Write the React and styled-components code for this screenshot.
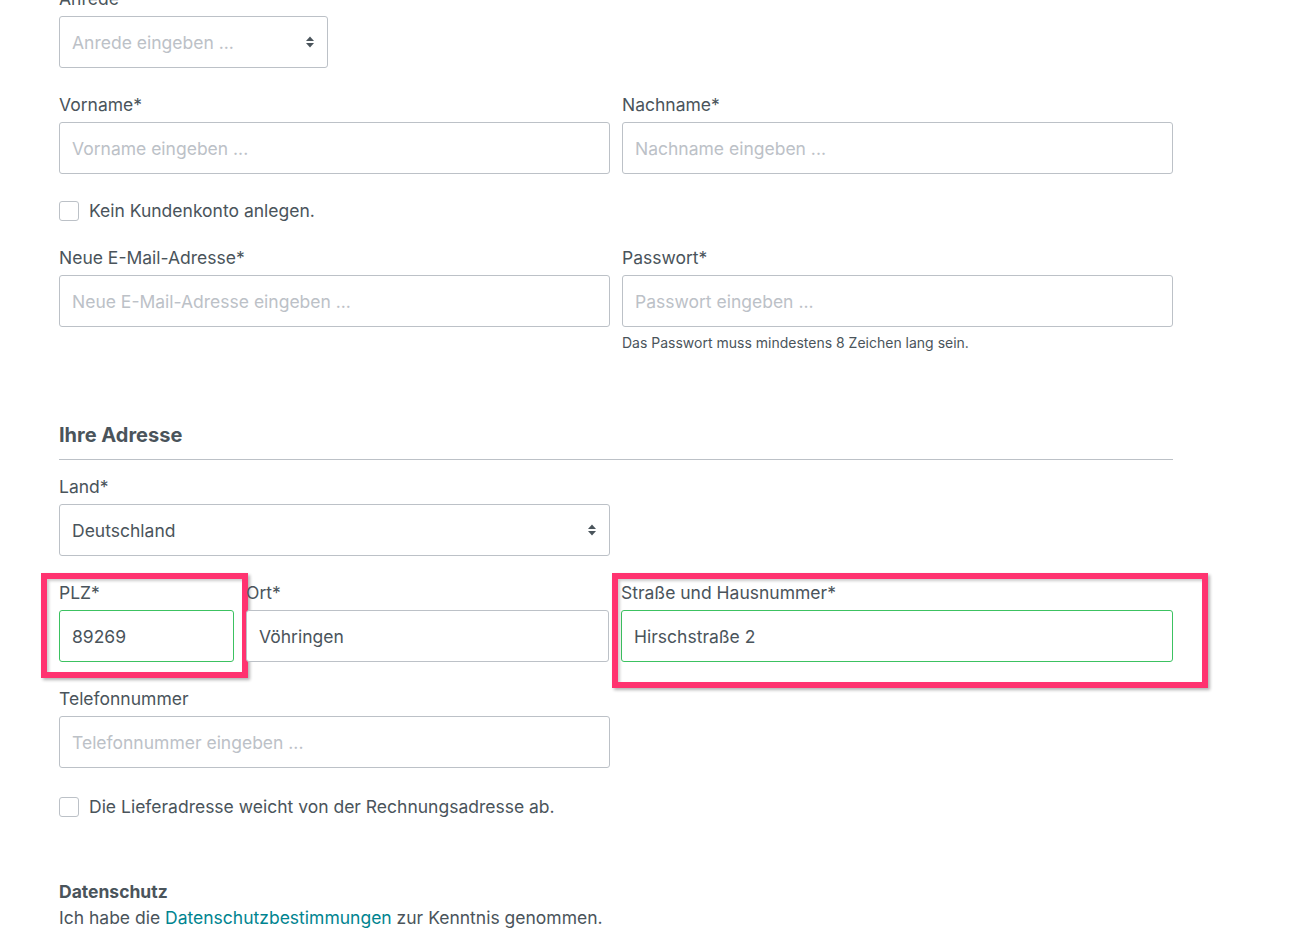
import React from "react";
import styled, { createGlobalStyle, css } from "styled-components";

const textColor = "#4a545b";
const borderColor = "#bcc1c7";
const placeholderColor = "#bcc1c7";
const successColor = "#3cc261";
const linkColor = "#008490";
const markColor = "#ff3370";

const GlobalStyle = createGlobalStyle`
	html, body {
		margin: 0;
		padding: 0;
		background: #fff;
	}
	body {
		font-family: Inter, "Noto Sans", "Liberation Sans", sans-serif;
		font-size: 17.5px;
		color: ${textColor};
	}
	* {
		box-sizing: border-box;
	}
`;

const Page = styled.div`
	width: 1114px;
	margin: -13px 0 0 59px;
`;

const Row = styled.div`
	display: grid;
	grid-template-columns: ${props => props.cols || "1fr 1fr"};
	column-gap: 12px;
	margin-bottom: ${props => props.gap || "25px"};
`;

const Field = styled.div`
	position: relative;
	display: flex;
	flex-direction: column;
`;

const Label = styled.label`
	display: block;
	line-height: 24px;
	margin-bottom: 5px;
	white-space: nowrap;
`;

const fieldBox = css`
	height: 52px;
	width: 100%;
	border: 1px solid ${props => (props.valid ? successColor : borderColor)};
	border-radius: 3px;
	background: #fff;
	padding: 0 12px;
	font-family: inherit;
	font-size: 17.5px;
	color: ${textColor};
	outline: none;
`;

const Input = styled.input`
	${fieldBox};
	&::placeholder {
		color: ${placeholderColor};
		opacity: 1;
	}
`;

const SelectBox = styled.div`
	${fieldBox};
	display: flex;
	align-items: center;
	justify-content: space-between;
	padding-right: 12px;
	color: ${props => (props.empty ? placeholderColor : textColor)};
`;

const Help = styled.div`
	font-size: 14px;
	line-height: 20px;
	margin-top: 6px;
`;

const CheckRow = styled.label`
	display: flex;
	align-items: center;
	gap: 10px;
	line-height: 24px;
	margin-bottom: ${props => props.gap || "23px"};
`;

const CheckBox = styled.span`
	width: 20px;
	height: 20px;
	border: 1px solid ${borderColor};
	border-radius: 3px;
	background: #fff;
	flex: none;
`;

const SectionTitle = styled.h2`
	margin: 67px 0 15px;
	font-size: 20px;
	line-height: 30px;
	font-weight: 700;
	padding-bottom: 9px;
	border-bottom: 1px solid ${borderColor};
`;

const PrivacyTitle = styled.div`
	font-weight: 700;
	line-height: 25px;
	margin-top: 60px;
`;

const PrivacyText = styled.p`
	margin: 1px 0 0;
	line-height: 25px;
`;

const Link = styled.a`
	color: ${linkColor};
	text-decoration: none;
`;

const Mark = styled.div`
	position: absolute;
	pointer-events: none;
	border: 6px solid ${markColor};
	box-shadow: 2px 2px 3px rgba(0, 0, 0, 0.3), inset 2px 2px 3px rgba(0, 0, 0, 0.2);
	top: -8px;
	left: ${props => props.left};
	right: ${props => props.right};
	bottom: ${props => props.bottom};
`;

const SortArrows = () => (
	<svg width="10" height="14" viewBox="0 0 10 14">
		<path d="M1 6 L5 1.5 L9 6 Z" fill={textColor} />
		<path d="M1 8 L5 12.5 L9 8 Z" fill={textColor} />
	</svg>
);

const Select = ({ children, empty }) => (
	<SelectBox empty={empty}>
		<span>{children}</span>
		<SortArrows />
	</SelectBox>
);

const App = () => (
	<>
		<GlobalStyle />
		<Page>
			<Row cols="269px 1fr">
				<Field>
					<Label>Anrede*</Label>
					<Select empty>Anrede eingeben ...</Select>
				</Field>
			</Row>

			<Row>
				<Field>
					<Label>Vorname*</Label>
					<Input placeholder="Vorname eingeben ..." />
				</Field>
				<Field>
					<Label>Nachname*</Label>
					<Input placeholder="Nachname eingeben ..." />
				</Field>
			</Row>

			<CheckRow>
				<CheckBox />
				Kein Kundenkonto anlegen.
			</CheckRow>

			<Row gap="0">
				<Field>
					<Label>Neue E-Mail-Adresse*</Label>
					<Input placeholder="Neue E-Mail-Adresse eingeben ..." />
				</Field>
				<Field>
					<Label>Passwort*</Label>
					<Input placeholder="Passwort eingeben ..." />
					<Help>Das Passwort muss mindestens 8 Zeichen lang sein.</Help>
				</Field>
			</Row>

			<SectionTitle>Ihre Adresse</SectionTitle>

			<Row>
				<Field>
					<Label>Land*</Label>
					<Select>Deutschland</Select>
				</Field>
			</Row>

			<Row cols="175px 363px 1fr">
				<Field>
					<Label>PLZ*</Label>
					<Input valid defaultValue="89269" />
					<Mark left="-18px" right="-14px" bottom="-16px" />
				</Field>
				<Field>
					<Label>Ort*</Label>
					<Input defaultValue="Vöhringen" />
				</Field>
				<Field>
					<Label>Straße und Hausnummer*</Label>
					<Input valid defaultValue="Hirschstraße 2" />
					<Mark left="-9px" right="-35px" bottom="-26px" />
				</Field>
			</Row>

			<Row gap="27px">
				<Field>
					<Label>Telefonnummer</Label>
					<Input placeholder="Telefonnummer eingeben ..." />
				</Field>
			</Row>

			<CheckRow gap="0">
				<CheckBox />
				Die Lieferadresse weicht von der Rechnungsadresse ab.
			</CheckRow>

			<PrivacyTitle>Datenschutz</PrivacyTitle>
			<PrivacyText>
				Ich habe die <Link href="#">Datenschutzbestimmungen</Link> zur Kenntnis genommen.
			</PrivacyText>
		</Page>
	</>
);

export default App;
